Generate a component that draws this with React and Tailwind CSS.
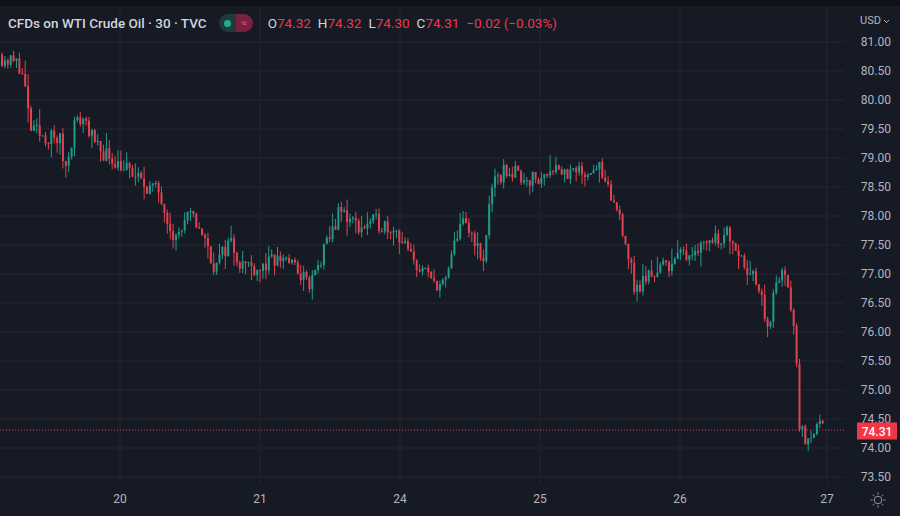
import React from 'react';

const KEYS = [
  [0, 80.75], [20, 80.6], [25, 80.2], [30, 79.5], [40, 79.4], [60, 79.3], [65, 78.8], [75, 79.6], [85, 79.7],
  [95, 79.2], [120, 78.9], [140, 78.6], [160, 78.4], [175, 77.6], [190, 78.0], [200, 77.8], [215, 77.1],
  [230, 77.6], [240, 77.2], [260, 77.1], [285, 77.3], [300, 77.0], [310, 76.8], [320, 77.2], [340, 78.1],
  [360, 77.8], [375, 77.9], [395, 77.8], [410, 77.3], [430, 76.9], [445, 76.8], [460, 77.9], [475, 77.6],
  [483, 77.1], [490, 78.4], [505, 78.8], [520, 78.7], [540, 78.6], [552, 78.9], [570, 78.7], [590, 78.8],
  [598, 78.9], [605, 78.5], [620, 78.0], [630, 77.2], [635, 76.7], [650, 77.0], [670, 77.2], [690, 77.4],
  [710, 77.6], [730, 77.7], [745, 77.2], [755, 76.9], [770, 76.0], [775, 76.9], [783, 77.0], [790, 76.6],
  [795, 75.9], [800, 74.3], [805, 74.2], [815, 74.35], [825, 74.31],
];

const py = (p) => 42 + (81 - p) * 58;

function interp(x) {
  for (let i = 1; i < KEYS.length; i++) {
    const [x1, p1] = KEYS[i];
    const [x0, p0] = KEYS[i - 1];
    if (x <= x1) return p0 + ((p1 - p0) * (x - x0)) / (x1 - x0);
  }
  return KEYS[KEYS.length - 1][1];
}

// deterministic noise
let seed = 11;
const rnd = () => {
  seed = (seed * 16807) % 2147483647;
  return seed / 2147483647;
};

const candles = [];
let prev = 80.78;
for (let x = 2; x <= 825; x += 2.9) {
  const target = interp(x);
  const close = target + (rnd() - 0.5) * 0.3;
  const open = prev;
  const hi = Math.max(open, close) + rnd() * rnd() * 0.3;
  const lo = Math.min(open, close) - rnd() * rnd() * 0.3;
  candles.push({ x, open, close, hi, lo });
  prev = close;
}

const prices = ['81.00', '80.50', '80.00', '79.50', '79.00', '78.50', '78.00', '77.50', '77.00', '76.50', '76.00', '75.50', '75.00', '74.50', '74.00', '73.50'];
const days = [['20', 120], ['21', 260], ['24', 400], ['25', 540], ['26', 680], ['27', 827]];

export default function App() {
  const font = { fontFamily: '"Roboto", "Liberation Sans", sans-serif' };
  return (
    <div className="w-[900px] h-[516px] bg-[#161a25] flex flex-col overflow-hidden text-[#b2b5be]" style={font}>
      <div className="h-[6px] bg-[#0f1119] shrink-0" />
      <div className="flex flex-1 min-h-0">
        {/* plot */}
        <div className="relative flex-1">
          <svg className="absolute inset-0" width="845" height="478" viewBox="0 6 845 478">
            {prices.map((p) => (
              <line key={p} x1="0" x2="845" y1={py(parseFloat(p))} y2={py(parseFloat(p))} stroke="#222632" strokeWidth="1" />
            ))}
            {days.map(([d, x]) => (
              <line key={d} x1={x} x2={x} y1="6" y2="484" stroke="#222632" strokeWidth="1" />
            ))}
            <line x1="0" x2="845" y1={py(74.31)} y2={py(74.31)} stroke="#f23645" strokeWidth="1" strokeDasharray="1 2" />
            {candles.map((c, i) => {
              const up = c.close >= c.open;
              const col = up ? '#1f9c8b' : '#e0424f';
              const top = py(Math.max(c.open, c.close));
              const h = Math.max(1, Math.abs(py(c.open) - py(c.close)));
              return (
                <g key={i}>
                  <line x1={c.x} x2={c.x} y1={py(c.hi)} y2={py(c.lo)} stroke={col} strokeWidth="1" />
                  <rect x={c.x - 1} y={top} width="2" height={h} fill={col} />
                </g>
              );
            })}
          </svg>
          {/* legend */}
          <div className="absolute left-[8px] top-[7px] flex items-center">
            <span className="text-[#d1d4dc] text-[13.5px] font-medium">CFDs on WTI Crude Oil · 30 · TVC</span>
            <span className="ml-[12px] flex h-[18px] rounded-full overflow-hidden">
              <span className="w-[17px] bg-[#1f3a3a] flex items-center justify-center">
                <span className="w-[7px] h-[7px] rounded-full bg-[#22ab94]" />
              </span>
              <span className="w-[17px] bg-[#7a2040] flex items-center justify-center text-[10px] text-[#e05a7a] leading-none">≈</span>
            </span>
            <span className="ml-[15px] text-[13.5px] flex gap-[7px]">
              <span><span className="text-[#d1d4dc]">O</span><span className="text-[#f23645]">74.32</span></span>
              <span><span className="text-[#d1d4dc]">H</span><span className="text-[#f23645]">74.32</span></span>
              <span><span className="text-[#d1d4dc]">L</span><span className="text-[#f23645]">74.30</span></span>
              <span><span className="text-[#d1d4dc]">C</span><span className="text-[#f23645]">74.31</span></span>
              <span className="text-[#f23645]">−0.02 (−0.03%)</span>
            </span>
          </div>
        </div>
        {/* price axis */}
        <div className="relative w-[55px] text-[12px]">
          <div className="absolute right-[10px] top-[7px] flex items-center gap-[2px] text-[11px] text-[#b2b5be]">
            USD
            <svg width="7" height="5" viewBox="0 0 7 5"><path d="M1 1l2.5 2.5L6 1" fill="none" stroke="currentColor" strokeWidth="1" /></svg>
          </div>
          {prices.map((p) => (
            <div key={p} className="absolute right-[9px] -translate-y-1/2" style={{ top: py(parseFloat(p)) - 6 }}>{p}</div>
          ))}
          <div className="absolute left-[12px] w-[40px] h-[17px] bg-[#f23645] text-white font-medium flex items-center justify-center -translate-y-1/2" style={{ top: py(74.31) - 5 }}>74.31</div>
        </div>
      </div>
      {/* time axis */}
      <div className="h-[32px] shrink-0 flex relative text-[12px]">
        <div className="relative flex-1">
          {days.map(([d, x]) => (
            <span key={d} className="absolute top-[6px] -translate-x-1/2" style={{ left: x }}>{d}</span>
          ))}
        </div>
        <div className="w-[55px] flex items-center justify-center pl-[10px]">
          <svg width="18" height="18" viewBox="0 0 24 24" fill="none" stroke="#9598a1" strokeWidth="1.3">
            <circle cx="12" cy="12" r="5" />
            <path d="M12 2v3M12 19v3M2 12h3M19 12h3M4.9 4.9l2.1 2.1M17 17l2.1 2.1M4.9 19.1L7 17M17 7l2.1-2.1" />
          </svg>
        </div>
      </div>
    </div>
  );
}
